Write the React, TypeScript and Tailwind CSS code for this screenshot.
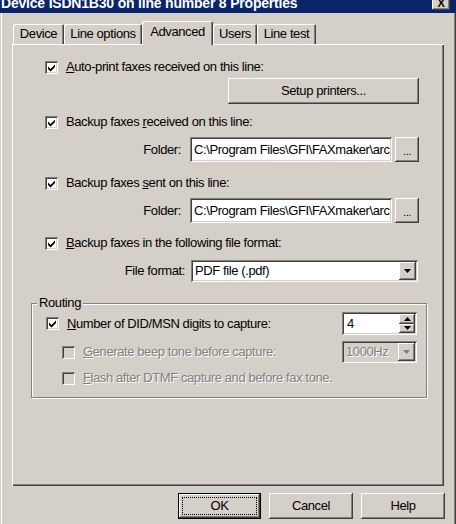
import type { ReactNode } from "react";

const raised =
  "shadow-[inset_-1px_-1px_#404040,inset_1px_1px_#fff,inset_-2px_-2px_#808080,inset_2px_2px_#d4d0c8]";
const sunken =
  "shadow-[inset_1px_1px_#808080,inset_-1px_-1px_#fff,inset_2px_2px_#404040,inset_-2px_-2px_#d4d0c8]";
const dim = "text-[#808080] [text-shadow:1px_1px_0_#fff]";

function CheckBox({ checked, disabled }: { checked?: boolean; disabled?: boolean }) {
  return (
    <span
      className={`flex h-[13px] w-[13px] shrink-0 items-center justify-center ${sunken} ${
        disabled ? "bg-[#d4d0c8]" : "bg-white"
      }`}
    >
      {checked && (
        <svg width="13" height="13" viewBox="0 0 13 13">
          <path d="M3 5.5 L5.5 8 L10 3.5 L10 6 L5.5 10.5 L3 8 Z" fill="#000" />
        </svg>
      )}
    </span>
  );
}

function CheckRow({
  checked,
  disabled,
  children,
  className = "",
}: {
  checked?: boolean;
  disabled?: boolean;
  children: ReactNode;
  className?: string;
}) {
  return (
    <div className={`flex h-[16px] items-center gap-[8px] ${className}`}>
      <CheckBox checked={checked} disabled={disabled} />
      <span className={disabled ? dim : "text-black"}>{children}</span>
    </div>
  );
}

function Arrow({ color = "#000", up = false }: { color?: string; up?: boolean }) {
  return (
    <svg width="7" height="4" viewBox="0 0 7 4">
      <path d={up ? "M3.5 0 L7 4 L0 4 Z" : "M0 0 L7 0 L3.5 4 Z"} fill={color} />
    </svg>
  );
}

function FolderRow() {
  return (
    <div className="flex h-[25px] items-center justify-end pr-[25px]">
      <span className="mr-[9px]">Folder:</span>
      <div className={`flex h-[25px] w-[202px] items-center overflow-hidden bg-white pl-[4px] ${sunken}`}>
        <span className="whitespace-nowrap">C:\Program Files\GFI\FAXmaker\arc</span>
      </div>
      <button className={`ml-[3px] flex h-[25px] w-[24px] items-end justify-center bg-[#d4d0c8] pb-[5px] text-[11px] leading-none ${raised}`}>
        ...
      </button>
    </div>
  );
}

function Tab({ label, width, active }: { label: string; width: number; active?: boolean }) {
  return (
    <div
      style={{ width }}
      className={`flex items-center justify-center rounded-t-[2px] bg-[#d4d0c8] shadow-[inset_1px_1px_#fff,inset_-1px_0_#404040,inset_-2px_0_#808080] ${
        active ? "relative z-10 -mb-px h-[24px] pb-[3px]" : "h-[20px]"
      }`}
    >
      {label}
    </div>
  );
}

function DialogButton({ children, isDefault }: { children: ReactNode; isDefault?: boolean }) {
  if (isDefault) {
    return (
      <button className="h-[26px] w-[83px] border border-black bg-[#d4d0c8] p-0">
        <span className={`flex h-full w-full p-[3px] ${raised}`}>
          <span className="flex flex-1 items-center justify-center border border-dotted border-black">
            {children}
          </span>
        </span>
      </button>
    );
  }
  return (
    <button className={`flex h-[26px] w-[84px] items-center justify-center bg-[#d4d0c8] ${raised}`}>
      {children}
    </button>
  );
}

export default function App() {
  return (
    <div className="flex h-[524px] w-[456px] flex-col overflow-hidden bg-[#d4d0c8] font-['Liberation_Sans',Arial,sans-serif] text-[13px] tracking-[-0.4px] text-black shadow-[inset_1px_0_#d4d0c8,inset_2px_0_#fff,inset_-1px_0_#404040,inset_-2px_0_#808080]">
      {/* title bar, top is cut off in the shot */}
      <div className="flex h-[13px] shrink-0 items-start justify-between overflow-hidden bg-[#0a246a]">
        <span className="-mt-[5px] whitespace-nowrap pl-[1px] text-[14px] font-bold leading-[16px] tracking-[-0.2px] text-white">
          Device ISDN1B30 on line number 8 Properties
        </span>
        <span className={`-mt-[4px] mr-[6px] flex h-[14px] w-[18px] items-end justify-center bg-[#d4d0c8] pb-[1px] text-[11px] font-bold leading-none ${raised}`}>
          X
        </span>
      </div>

      <div className="flex flex-1 flex-col px-[12px] pt-[8px]">
        <div className="flex h-[23px] items-end pl-[1px]">
          <Tab label="Device" width={51} />
          <Tab label="Line options" width={78} />
          <Tab label="Advanced" width={71} active />
          <Tab label="Users" width={44} />
          <Tab label="Line test" width={59} />
        </div>

        <div className="flex h-[442px] flex-col shadow-[inset_1px_1px_#fff,inset_-1px_-1px_#404040,inset_-2px_-2px_#808080]">
          <div className="flex flex-col pl-[33px]">
            <CheckRow checked className="mt-[15px]">
              <span className="underline">A</span>uto-print faxes received on this line:
            </CheckRow>
            <div className="mt-[3px] flex justify-end pr-[25px]">
              <button className={`flex h-[26px] w-[191px] items-center justify-center bg-[#d4d0c8] ${raised}`}>
                Setup printers...
              </button>
            </div>

            <CheckRow checked className="mt-[10px]">
              Backup faxes <span className="underline">r</span>eceived on this line:
            </CheckRow>
            <div className="mt-[7px]">
              <FolderRow />
            </div>

            <CheckRow checked className="mt-[13px]">
              Backup faxes <span className="underline">s</span>ent on this line:
            </CheckRow>
            <div className="mt-[7px]">
              <FolderRow />
            </div>

            <CheckRow checked className="mt-[12px]">
              <span className="underline">B</span>ackup faxes in the following file format:
            </CheckRow>
            <div className="mt-[9px] flex h-[22px] items-center justify-end pr-[26px]">
              <span className="mr-[6px]">File format:</span>
              <div className={`flex h-[22px] w-[227px] items-center bg-white p-[2px] pl-[4px] ${sunken}`}>
                <span className="flex-1">PDF file (.pdf)</span>
                <span className={`flex h-[18px] w-[17px] items-center justify-center bg-[#d4d0c8] ${raised}`}>
                  <Arrow />
                </span>
              </div>
            </div>
          </div>

          <fieldset className="mx-[17px] ml-[19px] mt-[13px] border border-[#808080] shadow-[inset_1px_1px_#fff,1px_1px_#fff]">
            <legend className="ml-[5px] bg-[#d4d0c8] px-[2px] leading-[16px]">Routing</legend>
            <div className="flex flex-col pb-[11px] pl-[14px] pr-[9px] pt-[1px]">
              <div className="flex h-[23px] items-center justify-between">
                <CheckRow checked>
                  <span className="underline">N</span>umber of DID/MSN digits to capture:
                </CheckRow>
                <div className={`flex h-[23px] w-[75px] items-stretch bg-white p-[2px] ${sunken}`}>
                  <span className="flex flex-1 items-center pl-[3px]">4</span>
                  <span className="flex w-[16px] flex-col">
                    <span className={`flex flex-1 items-center justify-center bg-[#d4d0c8] ${raised}`}>
                      <Arrow up />
                    </span>
                    <span className={`flex flex-1 items-center justify-center bg-[#d4d0c8] ${raised}`}>
                      <Arrow />
                    </span>
                  </span>
                </div>
              </div>

              <div className="mt-[6px] flex h-[22px] items-center justify-between">
                <CheckRow disabled className="pl-[16px]">
                  <span className="underline">G</span>enerate beep tone before capture:
                </CheckRow>
                <div className={`flex h-[22px] w-[75px] items-center bg-[#d4d0c8] p-[2px] pl-[4px] ${sunken}`}>
                  <span className={`flex-1 ${dim}`}>1000Hz</span>
                  <span className={`flex h-[18px] w-[17px] items-center justify-center bg-[#d4d0c8] ${raised}`}>
                    <Arrow color="#808080" />
                  </span>
                </div>
              </div>

              <CheckRow disabled className="mt-[7px] pl-[16px]">
                <span className="underline">F</span>lash after DTMF capture and before fax tone.
              </CheckRow>
            </div>
          </fieldset>
        </div>

        <div className="mt-[7px] flex justify-end gap-[8px] pr-[-1px] -mr-[1px]">
          <DialogButton isDefault>OK</DialogButton>
          <DialogButton>Cancel</DialogButton>
          <DialogButton>Help</DialogButton>
        </div>
      </div>
    </div>
  );
}
